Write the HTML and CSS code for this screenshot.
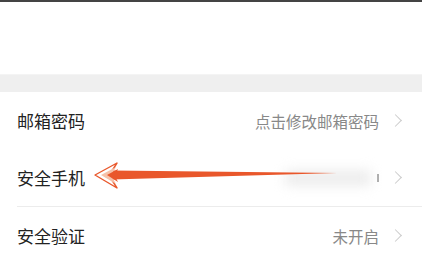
FILE: index.html
```html
<!DOCTYPE html>
<html lang="zh">

<head>
    <meta charset="UTF-8">
    <meta name="viewport" content="width=device-width, initial-scale=1.0">
    <link rel="stylesheet" href="styles.css">
    <title>账号安全</title>
</head>

<body>
    <div class="topline"></div>
    <div class="header"></div>
    <div class="band"></div>
    <div class="list">
        <div class="row">
            <span class="label">邮箱密码</span>
            <span class="value">点击修改邮箱密码</span>
            <span class="chevron"></span>
        </div>
        <div class="row">
            <span class="label">安全手机</span>
            <span class="value"><span class="masked"></span><span class="tick"></span></span>
            <span class="chevron"></span>
        </div>
        <div class="row line">
            <span class="label">安全验证</span>
            <span class="value">未开启</span>
            <span class="chevron"></span>
        </div>

        <!-- annotation arrow over the second row (list coords) -->
        <svg class="arrow" width="422" height="110" viewBox="0 0 422 110">
            <path d="M112 78.5 L337 81 L112 87.5 Z" fill="#e9572b" />
            <path d="M95 83 L117 71 L110 82 L110 85 L117 96 Z" fill="#fff" stroke="#e9572b" stroke-width="1.4" stroke-linejoin="round" />
            <path d="M101 83 L116 75 L112 82 L112 85 L116 92 Z" fill="#f6c1a9" />
            <path d="M107 83 L118 77 L116 82 L116 86 L118 90 Z" fill="#e9572b" />
        </svg>
    </div>
</body>

</html>
```

FILE: styles.css
```css
body {
    margin: 0;
    background-color: #fff;
    font-family: "Noto Sans CJK SC", "Noto Sans", sans-serif;
    overflow: hidden;
}

.topline {
    height: 2px;
    background-color: #444;
}

.header {
    height: 72px;
}

.band {
    height: 17px;
    background-color: #efefef;
    border-top: 1px solid #f4f4f4;
}

.list {
    position: relative;
}

.row {
    display: flex;
    align-items: center;
    height: 57px;
    padding: 0 18px 0 17px;
}

.row.line {
    border-top: 1px solid #ececec;
    margin-left: 17px;
    padding-left: 0;
}

.label {
    font-size: 17px;
    color: #222;
    flex: 1;
}

.value {
    font-size: 15.5px;
    color: #888;
    display: flex;
    align-items: center;
}

.masked {
    width: 86px;
    height: 16px;
    background-color: #ededed;
    filter: blur(6px);
    margin-right: 6px;
}

.tick {
    width: 2px;
    height: 8px;
    background-color: #aaa;
}

.chevron {
    width: 8px;
    height: 8px;
    border-top: 1.3px solid #ccc;
    border-right: 1.3px solid #ccc;
    transform: rotate(45deg);
    margin-left: 12px;
    margin-right: 4px;
}

.arrow {
    position: absolute;
    left: 0;
    top: 0;
}
```
